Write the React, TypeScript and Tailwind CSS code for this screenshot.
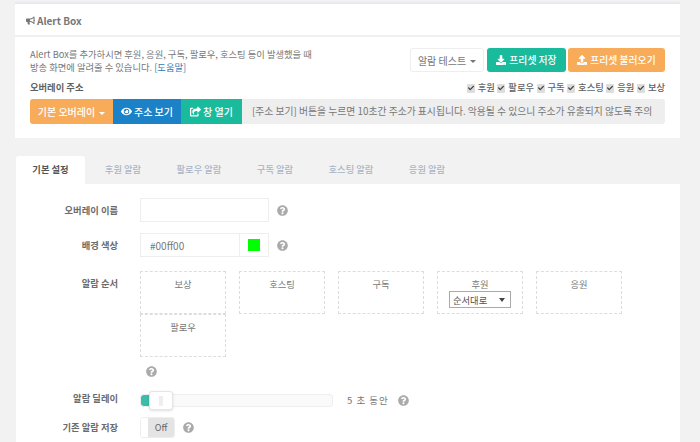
import { FaBullhorn, FaCheck, FaDownload, FaEye, FaQuestionCircle, FaShareSquare, FaUpload } from 'react-icons/fa';

const TABS = [
  { name: '후원 알람', width: 'w-[72px]' },
  { name: '팔로우 알람', width: 'w-[80px]' },
  { name: '구독 알람', width: 'w-[72px]' },
  { name: '호스팅 알람', width: 'w-[80px]' },
  { name: '응원 알람', width: 'w-[72px]' },
];
const EVENTS = ['후원', '팔로우', '구독', '호스팅', '응원', '보상'];

function Caret() {
  return <span className="inline-block ml-1 align-middle border-x-[3px] border-t-[3px] border-x-transparent border-t-current" />;
}

function Help({ className = '' }: { className?: string }) {
  return <FaQuestionCircle className={`text-[11px] text-[#aaaaaa] ${className}`} />;
}

function OrderBox({ name, children }: { name: string; children?: React.ReactNode }) {
  return (
    <div className="w-[86px] h-[43px] border border-dashed border-[#dddddd] flex flex-col items-center pt-[5px] text-[9.3px] leading-[14px] text-[#777777]">
      {name}
      {children}
    </div>
  );
}

function Row({ label, className = '', labelClass = '', children }: { label: string; className?: string; labelClass?: string; children: React.ReactNode }) {
  return (
    <div className={`flex ${className}`}>
      <label className={`w-[102px] shrink-0 text-right font-bold text-[9.3px] leading-[14px] text-[#6b6b6b] ${labelClass}`}>{label}</label>
      <div className="ml-[22px] flex-1 min-w-0">{children}</div>
    </div>
  );
}

export default function App() {
  return (
    <div className="w-[700px] h-[442px] overflow-hidden bg-[#f2f2f2] pt-[2px] pl-[15px] pr-[20px] text-[#777777] font-['Noto_Sans_CJK_KR','Noto_Sans',sans-serif] text-[9.3px]">
      {/* Alert Box 패널 */}
      <section className="bg-white border-t-[2px] border-[#e6e9ed] h-[136px] px-[15px]">
        <h2 className="h-[33px] flex items-center gap-[2px] border-b-2 border-[#f0f0f0] -mx-[15px] px-[11px] pt-[1px] font-bold text-[10px] text-[#777777]">
          <FaBullhorn className="text-[9px]" /> Alert Box
        </h2>

        <div className="flex justify-between pt-[11px]">
          <p className="w-[300px] leading-[13px] text-[9.3px]">
            Alert Box를 추가하시면 후원, 응원, 구독, 팔로우, 호스팅 등이 발생했을 때<br />
            방송 화면에 알려줄 수 있습니다. <a className="text-[#337ab7]">[도움말]</a>
          </p>
          <div className="flex h-[24px]">
            <button className="w-[74px] mr-[3px] border border-[#eeeeee] rounded-[3px] bg-white text-[10px] text-[#777777]">알람 테스트<Caret /></button>
            <button className="w-[79px] mr-[2px] flex items-center justify-center gap-[3px] rounded-[3px] bg-[#1abb9c] font-medium text-[9.8px] text-white"><FaDownload className="text-[10px]" /> 프리셋 저장</button>
            <button className="w-[97px] flex items-center justify-center gap-[3px] rounded-[3px] bg-[#f8ac59] font-medium text-[9.8px] text-white"><FaUpload className="text-[10px]" /> 프리셋 불러오기</button>
          </div>
        </div>

        <div className="flex justify-between items-center mt-[6px] h-[16px]">
          <span className="font-bold text-[9.3px] text-[#5f5f5f]">오버레이 주소</span>
          <div className="flex items-center gap-[2.5px] font-medium text-[9.3px] text-[#5f5f5f]">
            {EVENTS.map((name) => (
              <span key={name} className="flex items-center gap-[3px]">
                <span className="w-[8px] h-[9px] flex items-center justify-center rounded-[1px] bg-[#dddddd]">
                  <FaCheck className="text-[6px] text-[#444444]" />
                </span>
                {name}
              </span>
            ))}
          </div>
        </div>

        <div className="flex h-[25px] mt-[3px] rounded-[3px] overflow-hidden text-white text-[10px] font-medium">
          <button className="w-[83px] shrink-0 bg-[#f8ac59]">기본 오버레이<Caret /></button>
          <button className="w-[68px] shrink-0 flex items-center justify-center gap-[2px] bg-[#1c82c8]"><FaEye className="text-[11px]" /> 주소 보기</button>
          <button className="w-[61px] shrink-0 flex items-center justify-center gap-[2px] bg-[#1abb9c]"><FaShareSquare className="text-[11px]" /> 창 열기</button>
          <div className="flex-1 min-w-0 bg-[#eeeeee] pl-[10px] leading-[25px] whitespace-nowrap overflow-hidden text-[#777777] font-normal text-[9.8px]">
            [주소 보기] 버튼을 누르면 10초간 주소가 표시됩니다. 악용될 수 있으니 주소가 유출되지 않도록 주의
          </div>
        </div>
      </section>

      {/* 탭 */}
      <div className="flex mt-[18px] h-[28px] pl-[1px] text-[9.3px] font-medium">
        <div className="w-[69px] mr-[2px] bg-white rounded-t-[3px] flex items-center justify-center font-bold text-[#555555]">기본 설정</div>
        <nav className="flex text-[#a9b4c4] items-center">
          {TABS.map((tab) => (
            <span key={tab.name} className={`${tab.width} text-center`}>{tab.name}</span>
          ))}
        </nav>
      </div>

      {/* 기본 설정 폼 */}
      <section className="bg-white ml-[1px] h-[260px] pt-[14px] pr-[15px]">
        <Row label="오버레이 이름" labelClass="pt-[5px]">
          <div className="flex items-center gap-[8px]">
            <input className="w-[129px] h-[24px] border border-[#eeeeee]" readOnly />
            <Help />
          </div>
        </Row>

        <Row label="배경 색상" className="mt-[11px]" labelClass="pt-[5px]">
          <div className="flex items-center gap-[8px]">
            <div className="w-[129px] h-[24px] border border-[#eeeeee] flex">
              <span className="flex-1 pl-[9px] leading-[24px] text-[10px]">#00ff00</span>
              <span className="w-[29px] border-l border-[#eeeeee] flex items-center justify-center">
                <span className="w-[12px] h-[12px] bg-[#00ff00]" />
              </span>
            </div>
            <Help />
          </div>
        </Row>

        <Row label="알람 순서" className="mt-[14px]" labelClass="pt-[5px]">
          <div className="flex flex-wrap w-[500px] gap-x-[13px]">
            <OrderBox name="보상" />
            <OrderBox name="호스팅" />
            <OrderBox name="구독" />
            <OrderBox name="후원">
              <span className="w-[62px] h-[17px] border border-[#aaaaaa] flex items-center justify-between pl-[3px] pr-[5px] text-[9.3px] text-[#555555]">
                순서대로 <span className="border-x-[3px] border-t-[4px] border-x-transparent border-t-[#444444]" />
              </span>
            </OrderBox>
            <OrderBox name="응원" />
            <OrderBox name="팔로우" />
          </div>
          <Help className="ml-[6px] mt-[9px]" />
        </Row>

        <Row label="알람 딜레이" className="mt-[14px]">
          <div className="flex items-center h-[19px]">
            <div className="relative w-[193px] h-[13px] border border-[#eeeeee] rounded-[3px] bg-[#fafafa]">
              <div className="w-[9px] h-full bg-[#3cbcab] rounded-l-[3px]" />
              <div className="absolute left-[8px] -top-[4px] w-[24px] h-[19px] bg-white border border-[#e5e5e5] rounded-[3px] shadow-sm flex items-center justify-center">
                <span className="w-[4px] h-[10px] bg-[#eeeeee]" />
              </div>
            </div>
            <span className="ml-[14px] tracking-[1px] text-[9.5px]">5 초 동안</span>
            <Help className="ml-[9px]" />
          </div>
        </Row>

        <Row label="기존 알람 저장" className="mt-[7px] items-center" labelClass="-mt-[1px]">
          <div className="flex items-center gap-[8px]">
            <div className="w-[35px] h-[21px] border border-[#eeeeee] rounded-[3px] flex overflow-hidden">
              <span className="w-[7px] bg-white" />
              <span className="flex-1 bg-[#e4e4e4] flex items-center justify-center text-[9px] text-[#666666]">Off</span>
            </div>
            <Help />
          </div>
        </Row>
      </section>
    </div>
  );
}
